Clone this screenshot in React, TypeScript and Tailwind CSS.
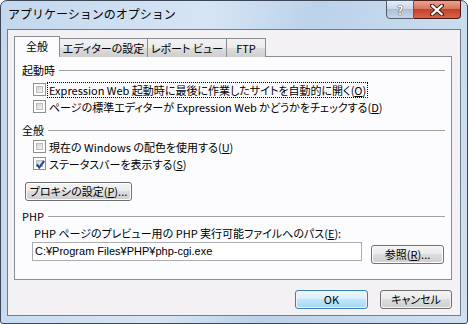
import React from "react";

const font = { fontFamily: '"Noto Sans CJK JP", "Liberation Sans", sans-serif' };

function CheckBox({ checked }: { checked?: boolean }) {
  return (
    <div className="w-[13px] h-[13px] border border-[#8e8f8f] bg-white p-[2px] shrink-0">
      <div className="w-full h-full bg-gradient-to-br from-[#cbcfd5] to-[#f6f6f6] border border-[#bdbdbd] relative">
        {checked && (
          <svg viewBox="0 0 9 9" className="absolute -left-[2px] -top-[2px] w-[11px] h-[11px]">
            <path d="M1.5 4.5 L3.5 7 L7.5 1.5" stroke="#264b9f" strokeWidth="1.8" fill="none" />
          </svg>
        )}
      </div>
    </div>
  );
}

function Btn({ children, w, def }: { children: React.ReactNode; w: string; def?: boolean }) {
  return (
    <div
      className={`${w} h-[19px] rounded-[3px] border ${
        def ? "border-[#3c7fb1]" : "border-[#707070]"
      } p-px flex`}
    >
      <div
        className={`flex-1 rounded-[2px] flex items-center justify-center text-[11px] leading-none text-black whitespace-nowrap ${
          def
            ? "bg-[linear-gradient(#eaf6fd_0%,#d9f0fc_45%,#bee6fd_50%,#a7d9f5_100%)]"
            : "bg-[linear-gradient(#f2f2f2_0%,#ebebeb_45%,#dddddd_50%,#cfcfcf_100%)]"
        }`}
      >
        {children}
      </div>
    </div>
  );
}

function Header({ label }: { label: string }) {
  return (
    <div className="flex items-center h-[14px]">
      <span className="text-[11px] leading-none">{label}</span>
      <div className="flex-1 h-px bg-[#a0a0a0] ml-[4px]" />
    </div>
  );
}

function Row({ checked, children, focus }: { checked?: boolean; children: React.ReactNode; focus?: boolean }) {
  return (
    <div className="flex items-center h-[17px] ml-[11px]">
      <CheckBox checked={checked} />
      <span
        className={`ml-[2px] px-px text-[11px] leading-[14px] whitespace-nowrap ${
          focus ? "outline outline-1 outline-dotted outline-black" : ""
        }`}
      >
        {children}
      </span>
    </div>
  );
}

const tabCls =
  "h-[19px] border border-[#898c95] border-l-0 border-b-0 bg-[linear-gradient(#f2f2f2,#ebebeb_50%,#dddddd_50%,#cfcfcf)] flex items-center justify-center text-[11px] leading-none whitespace-nowrap";

export default function App() {
  return (
    <div
      className="w-[468px] h-[324px] relative overflow-hidden text-black [font-feature-settings:'palt']"
      style={font}
    >
      <div className="absolute inset-0 rounded-t-[7px] rounded-b-[3px] border border-[#3b4757] bg-[linear-gradient(100deg,#c3d7ee_0%,#d6e5f5_40%,#bcd2ea_60%,#cfe0f2_100%)] flex flex-col">
        {/* title bar */}
        <div className="h-[28px] flex items-start relative">
          <span className="ml-[7px] mt-[5px] text-[12px] leading-[16px] text-black [font-feature-settings:normal]">
            アプリケーションのオプション
          </span>
          <div className="ml-auto mr-[6px] flex -mt-px">
            <div className="w-[28px] h-[19px] rounded-bl-[4px] border border-[#525e6e] bg-[linear-gradient(#e6eef7_0%,#c9d7e6_45%,#aebfd3_50%,#c6d6e8_100%)] flex items-center justify-center text-[12px] font-bold text-white [text-shadow:0_0_1px_#333,0_0_1px_#333]">
              ?
            </div>
            <div className="w-[47px] h-[19px] rounded-br-[4px] border border-l-0 border-[#4a1a14] bg-[linear-gradient(#e8a493_0%,#d9775f_45%,#c7412a_50%,#d5644a_100%)] flex items-center justify-center">
              <svg viewBox="0 0 14 12" className="w-[14px] h-[12px]">
                <path d="M2 1.5 L12 10.5 M12 1.5 L2 10.5" stroke="#3a1a14" strokeWidth="4" strokeLinecap="square" />
                <path d="M2.3 1.8 L11.7 10.2 M11.7 1.8 L2.3 10.2" stroke="#ffffff" strokeWidth="2.2" strokeLinecap="square" />
              </svg>
            </div>
          </div>
        </div>
        {/* client */}
        <div className="ml-[6px] mr-[6px] h-[287px] border border-[#6f7d8d] bg-[#f3f1f4] flex flex-col px-[6px] pt-[6px]">
          {/* tabs */}
          <div className="flex items-end h-[21px] relative z-10">
            <div className="w-[46px] h-[21px] border border-[#898c95] border-b-0 bg-[#fcfcfe] flex items-center justify-center text-[11px] leading-none pb-[1px] whitespace-nowrap">
              全般
            </div>
            <div className={`w-[88px] ${tabCls}`}>エディターの設定</div>
            <div className={`w-[79px] ${tabCls}`}>レポート ビュー</div>
            <div className={`w-[39px] ${tabCls}`}>FTP</div>
          </div>
          {/* panel */}
          <div className="-mt-px w-[438px] h-[224px] border border-[#898c95] bg-[#fcfcfe] pl-[7px] pr-[6px] pt-[6px] flex flex-col">
            <Header label="起動時" />
            <div className="mt-[4px]">
              <Row focus>
                Expression Web 起動時に最後に作業したサイトを自動的に開く(<u>O</u>)
              </Row>
              <Row>
                ページの標準エディターが Expression Web かどうかをチェックする(<u>D</u>)
              </Row>
            </div>
            <div className="mt-[8px]">
              <Header label="全般" />
            </div>
            <div className="mt-[1px]">
              <Row>
                現在の Windows の配色を使用する(<u>U</u>)
              </Row>
              <Row checked>
                ステータスバーを表示する(<u>S</u>)
              </Row>
            </div>
            <div className="mt-[10px] ml-[3px]">
              <Btn w="w-[107px]">
                プロキシの設定(<u>P</u>)...
              </Btn>
            </div>
            <div className="mt-[8px]">
              <Header label="PHP" />
            </div>
            <div className="mt-[3px] ml-[12px] h-[14px] text-[11px] leading-[14px] whitespace-nowrap">
              PHP ページのプレビュー用の PHP 実行可能ファイルへのパス(<u>E</u>):
            </div>
            <div className="mt-[2px] ml-[10px] flex items-start">
              <div
                className="w-[330px] h-[19px] border border-[#abadb3] bg-white flex items-center pl-[2px] text-[11px] leading-none [font-feature-settings:normal]"
                style={{ fontFamily: '"Liberation Sans", "Noto Sans CJK JP", sans-serif' }}
              >
                C:¥Program Files¥PHP¥php-cgi.exe
              </div>
              <div className="ml-[9px] mt-[3px]">
                <Btn w="w-[73px]">
                  参照(<u>R</u>)...
                </Btn>
              </div>
            </div>
          </div>
          {/* bottom buttons */}
          <div className="mt-[10px] flex justify-end w-[438px]">
            <Btn w="w-[73px]" def>
              OK
            </Btn>
            <div className="ml-[12px]">
              <Btn w="w-[72px]">キャンセル</Btn>
            </div>
          </div>
        </div>
      </div>
    </div>
  );
}
